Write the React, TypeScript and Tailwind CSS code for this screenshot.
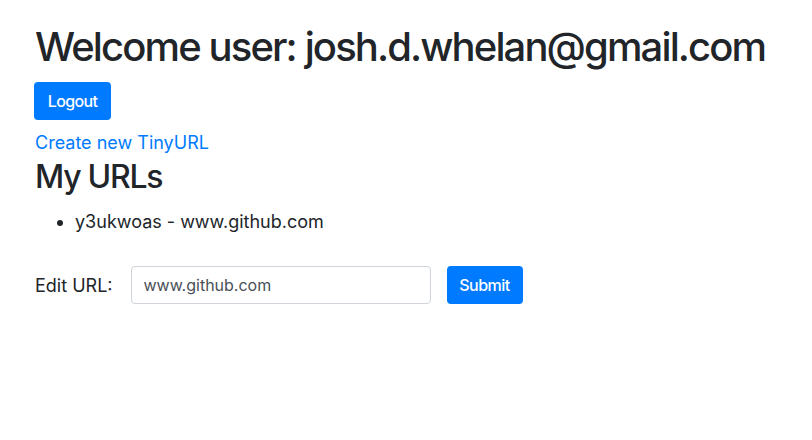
import React, { useState } from "react";

const App: React.FC = () => {
  const [url, setUrl] = useState("www.github.com");

  return (
    <div className="min-h-screen bg-white px-[35px] pt-[23px] text-[#212529] font-['Inter','Liberation_Sans',sans-serif]">
      <h1 className="whitespace-nowrap text-[40px] leading-[1.2] font-medium tracking-[-0.047em]">
        Welcome user: josh.d.whelan@gmail.com
      </h1>

      <button className="mt-[11px] -ml-px h-[38px] w-[77px] rounded-[4px] bg-[#007bff] text-[16px] font-medium tracking-[-0.04em] text-white">
        Logout
      </button>

      {/* link + list */}
      <div className="mt-[9px] text-[18px] leading-[1.5]">
        <a href="#" className="text-[#007bff]">
          Create new TinyURL
        </a>
      </div>
      <h2 className="mt-[2px] text-[32px] leading-[1.2] font-medium tracking-[-0.04em]">
        My URLs
      </h2>
      <ul className="mt-[12px] list-disc pl-[40px] text-[18px] leading-[1.5]">
        <li>y3ukwoas - www.github.com</li>
      </ul>

      {/* edit form */}
      <form
        className="mt-[31px] flex items-center"
        onSubmit={(e) => e.preventDefault()}
      >
        <label htmlFor="edit-url" className="text-[18px] leading-[1.5]">
          Edit URL:
        </label>
        <input
          id="edit-url"
          className="ml-[18px] h-[38px] w-[300px] rounded-[4px] border border-[#ced4da] px-3 text-[16px] text-[#495057] outline-none"
          value={url}
          onChange={(e) => setUrl(e.target.value)}
        />
        <button
          type="submit"
          className="ml-4 h-[38px] w-[76px] rounded-[4px] bg-[#007bff] text-[16px] font-medium tracking-[-0.03em] text-white"
        >
          Submit
        </button>
      </form>
    </div>
  );
};

export default App;
